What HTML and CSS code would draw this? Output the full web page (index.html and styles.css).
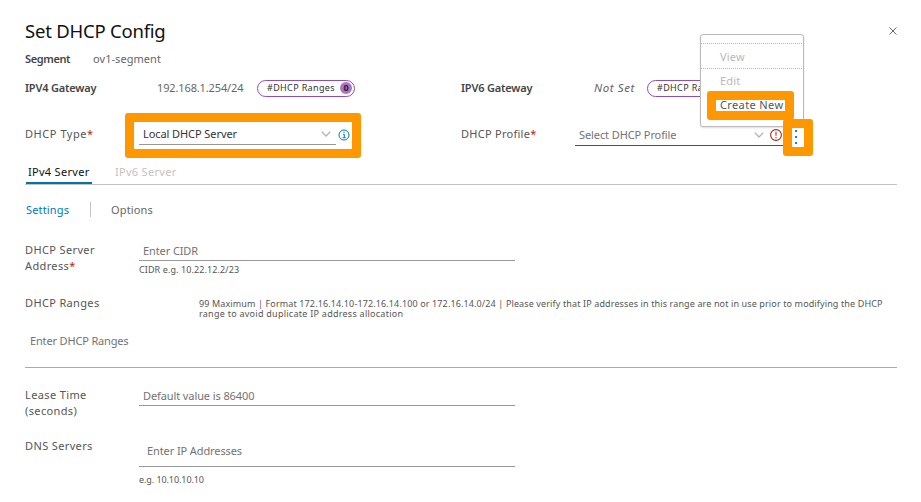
FILE: index.html
```html
<!DOCTYPE html>
<html lang="en">
<head>
<meta charset="utf-8">
<title>Set DHCP Config</title>
<link rel="stylesheet" href="styles.css">
</head>
<body>
<main class="dialog">
  <header class="header">
    <h1 class="title">Set DHCP Config</h1>
    <svg class="close" viewBox="0 0 8 8"><path d="M.5.5l7 7M7.5.5l-7 7"/></svg>
  </header>

  <div class="segment">
    <strong class="strong seg-label">Segment</strong>
    <span class="value seg-value">ov1-segment</span>
  </div>

  <div class="columns gateways">
    <div class="pair">
      <strong class="strong gateway-label">IPV4 Gateway</strong>
      <span class="value address">192.168.1.254/24</span>
      <span class="pill"><span class="pill-text">#DHCP Ranges</span><b class="count">0</b></span>
    </div>
    <div class="pair">
      <strong class="strong gateway-label">IPV6 Gateway</strong>
      <em class="value unset">Not Set</em>
      <span class="pill"><span class="pill-text">#DHCP Ranges</span><b class="count">0</b></span>
    </div>
  </div>

  <div class="columns selectors">
    <div class="pair">
      <span class="label type-label">DHCP Type<i class="req">*</i></span>
      <div class="select type-select">
        <span class="type-value">Local DHCP Server</span>
        <svg class="chevron" viewBox="0 0 10 6"><path d="M.8.7L5 5 9.2.7"/></svg>
      </div>
      <svg class="info" viewBox="0 0 12 12"><circle cx="6" cy="6" r="5"/><path d="M5 5.3h1.3v3.2M4.7 8.7h3"/><path d="M5.4 3.3h1.2"/></svg>
      <span class="mark mark-type"></span>
    </div>
    <div class="pair">
      <span class="label profile-label">DHCP Profile<i class="req">*</i></span>
      <div class="select profile-select">
        <span class="placeholder profile-value">Select DHCP Profile</span>
        <svg class="chevron" viewBox="0 0 10 6"><path d="M.8.7L5 5 9.2.7"/></svg>
        <svg class="alert" viewBox="0 0 12 12"><circle cx="6" cy="6" r="5.4"/><path d="M6 2.7v4.1M6 8v1.3"/></svg>
      </div>
      <div class="more"><i></i><i></i><i></i></div>
      <div class="menu">
        <span class="item view">View</span>
        <span class="item edit">Edit</span>
        <span class="item create">Create New</span>
      </div>
      <span class="mark mark-create"></span>
      <span class="mark mark-more"></span>
    </div>
  </div>

  <nav class="tabs">
    <span class="tab active">IPv4 Server</span>
    <span class="tab">IPv6 Server</span>
  </nav>

  <nav class="subtabs">
    <span class="subtab on">Settings</span>
    <span class="subtab off">Options</span>
  </nav>

  <section class="field server">
    <span class="label two">DHCP Server<br>Address<i class="req">*</i></span>
    <div>
      <div class="input cidr"><span class="placeholder">Enter CIDR</span></div>
      <small class="hint h-cidr">CIDR e.g. 10.22.12.2/23</small>
    </div>
  </section>

  <section class="ranges">
    <div class="ranges-top">
      <span class="label l-ranges">DHCP Ranges</span>
      <small class="help"><span class="help-a">99 Maximum | Format 172.16.14.10-172.16.14.100 or 172.16.14.0/24 | Please verify that IP addresses in this range are not in use prior to modifying the DHCP</span><span class="help-b">range to avoid duplicate IP address allocation</span></small>
    </div>
    <div class="ranges-input"><span class="placeholder">Enter DHCP Ranges</span></div>
  </section>

  <section class="field lease">
    <span class="label two">Lease Time<br>(seconds)</span>
    <div>
      <div class="input default"><span class="placeholder">Default value is 86400</span></div>
    </div>
  </section>

  <section class="field dns">
    <span class="label two">DNS Servers</span>
    <div>
      <div class="input addresses"><span class="placeholder">Enter IP Addresses</span></div>
      <small class="hint h-ip">e.g. 10.10.10.10</small>
    </div>
  </section>
</main>
</body>
</html>
```
FILE: styles.css
```css
* { box-sizing: border-box; }
body { margin: 0; background: #fff; overflow: hidden; }
.dialog {
  height: 502px;
  padding: 16px 24px 0 25px;
  font: 11px/16px "Noto Sans", sans-serif;
  color: #565656;
  white-space: nowrap;
}
svg { fill: none; flex: none; }
.header { display: flex; justify-content: space-between; align-items: center; height: 30px; }
.title { margin: 0; font-size: 18.5px; line-height: 30px; font-weight: 400; letter-spacing: -.22px; color: #111; }
.close { width: 8px; height: 8px; stroke: #565656; stroke-width: .9; }
.strong { font-weight: 600; color: #454545; letter-spacing: -.2px; }
.value { color: #666; }
.segment { display: flex; align-items: center; height: 26px; }
.seg-label { width: 68px; letter-spacing: -.38px; }
.seg-value { letter-spacing: .06px; }

.columns { display: grid; grid-template-columns: 436px 1fr; }
.pair { position: relative; display: flex; align-items: center; min-width: 0; }
.gateways { height: 32px; }
.gateway-label { width: 132px; }
.address { width: 100px; letter-spacing: -.13px; }
.unset { width: 54px; padding-left: 1px; font-size: 11.5px; letter-spacing: .6px; }
.pill {
  display: flex; justify-content: space-between; align-items: center;
  width: 98px; height: 17px; padding: 0 2px 0 9px;
  border: 1px solid #8d4fb5; border-radius: 9px;
  font-size: 9px; letter-spacing: .35px; color: #333;
}
.count {
  width: 12px; height: 12px; border-radius: 50%; background: #ad73c8;
  color: #222; font-size: 9px; line-height: 12px; letter-spacing: 0; text-align: center;
}
.selectors { height: 56px; padding-top: 8px; }
.selectors .label { width: 114px; padding-bottom: 4px; }
.type-label { letter-spacing: .55px; }
.profile-label { letter-spacing: .27px; }
.req { color: #c92100; font-style: normal; font-size: 11px; line-height: 10px; letter-spacing: 0; }
.select { display: flex; align-items: center; justify-content: space-between; height: 21px; margin-bottom: 3px; letter-spacing: -.08px; }
.type-select { width: 197px; border-bottom: 1px solid #999; padding: 0 5px 1px 4px; color: #333; }
.profile-select { width: 208px; border-bottom: 1px solid #c92100; padding: 0 1px 1px 4px; margin-bottom: 1px; }
.profile-select .chevron { margin-left: auto; margin-right: 6px; }
.chevron { width: 10px; height: 6px; stroke: #b5b5b5; stroke-width: 1.3; }
.info { width: 12px; height: 12px; margin: 0 0 2px 2px; stroke: #007cbb; stroke-width: 1; }
.alert { width: 12px; height: 12px; stroke: #b52a10; stroke-width: 1.1; }
.more { display: flex; flex-direction: column; gap: 4px; margin: 0 0 0 12px; padding-top: 1px; }
.more i { width: 2px; height: 2px; background: #1687b8; }
.placeholder { color: #737373; letter-spacing: -.1px; }
.mark { position: absolute; border: 9px solid #ff9800; border-radius: 3px; }
.mark-type { left: 100px; top: 1px; width: 236px; height: 45px; }
.mark-create { left: 246px; top: -21px; width: 87px; height: 29px; }
.mark-more { left: 322px; top: 7px; width: 30px; height: 37px; }
.menu {
  position: absolute; left: 239px; top: -78px; width: 104px; height: 93px;
  padding-top: 8px; background: #fff; border: 1px solid #bbb; border-radius: 3px;
  box-shadow: 0 1px 2px #0002; color: #565656; letter-spacing: .2px;
}
.item { display: block; height: 24px; padding-left: 19px; line-height: 24px; }
.view { height: 26px; margin: 0 -1px; padding-left: 19px; border: 1px dotted #bbb; line-height: 26px; }
.view, .edit { color: #b8b8b8; }
.create { letter-spacing: .38px; }

.tabs { display: flex; gap: 21px; height: 25px; padding-left: 1px; border-bottom: 1px solid #c2c2c2; letter-spacing: .3px; }
.tab { height: 24px; padding: 4px 1px 0 2px; color: #c2c2c2; }
.tab.active { width: 66px; border-bottom: 2px solid #0074a3; color: #111; }
.subtabs { display: flex; height: 48px; padding: 17px 0 0 1px; letter-spacing: .15px; }
.subtab { height: 15px; line-height: 15px; }
.on { width: 65px; border-right: 1px solid #c2c2c2; color: #0079b8; }
.off { padding-left: 20px; color: #666; }

.field { display: grid; grid-template-columns: 114px 376px; }
.server { height: 59px; }
.two { padding-top: 9px; letter-spacing: .37px; }
.input { border-bottom: 1px solid #999; padding-left: 4px; }
.cidr { height: 28px; padding-top: 10px; }
.hint { display: block; font-size: 9px; line-height: 14px; margin-top: 2px; }
.h-cidr { letter-spacing: .1px; }
.ranges { height: 76px; border-bottom: 1px solid #aaa; }
.ranges-top { display: flex; height: 36px; padding-top: 3px; }
.l-ranges { width: 174px; letter-spacing: .35px; }
.help { display: flex; flex-direction: column; padding-top: 4px; font-size: 9px; line-height: 10px; }
.help-a { letter-spacing: .124px; }
.help-b { letter-spacing: .26px; }
.ranges-input { padding: 5px 0 0 5px; }
.ranges-input .placeholder { letter-spacing: -.16px; }
.lease { height: 60px; padding-top: 10px; }
.default { height: 28px; padding-top: 10px; }
.dns { height: 74px; }
.dns .two { padding-top: 10px; }
.addresses { height: 39px; padding: 15px 0 0 8px; }
.h-ip { margin-top: 6px; letter-spacing: -.08px; }
```
